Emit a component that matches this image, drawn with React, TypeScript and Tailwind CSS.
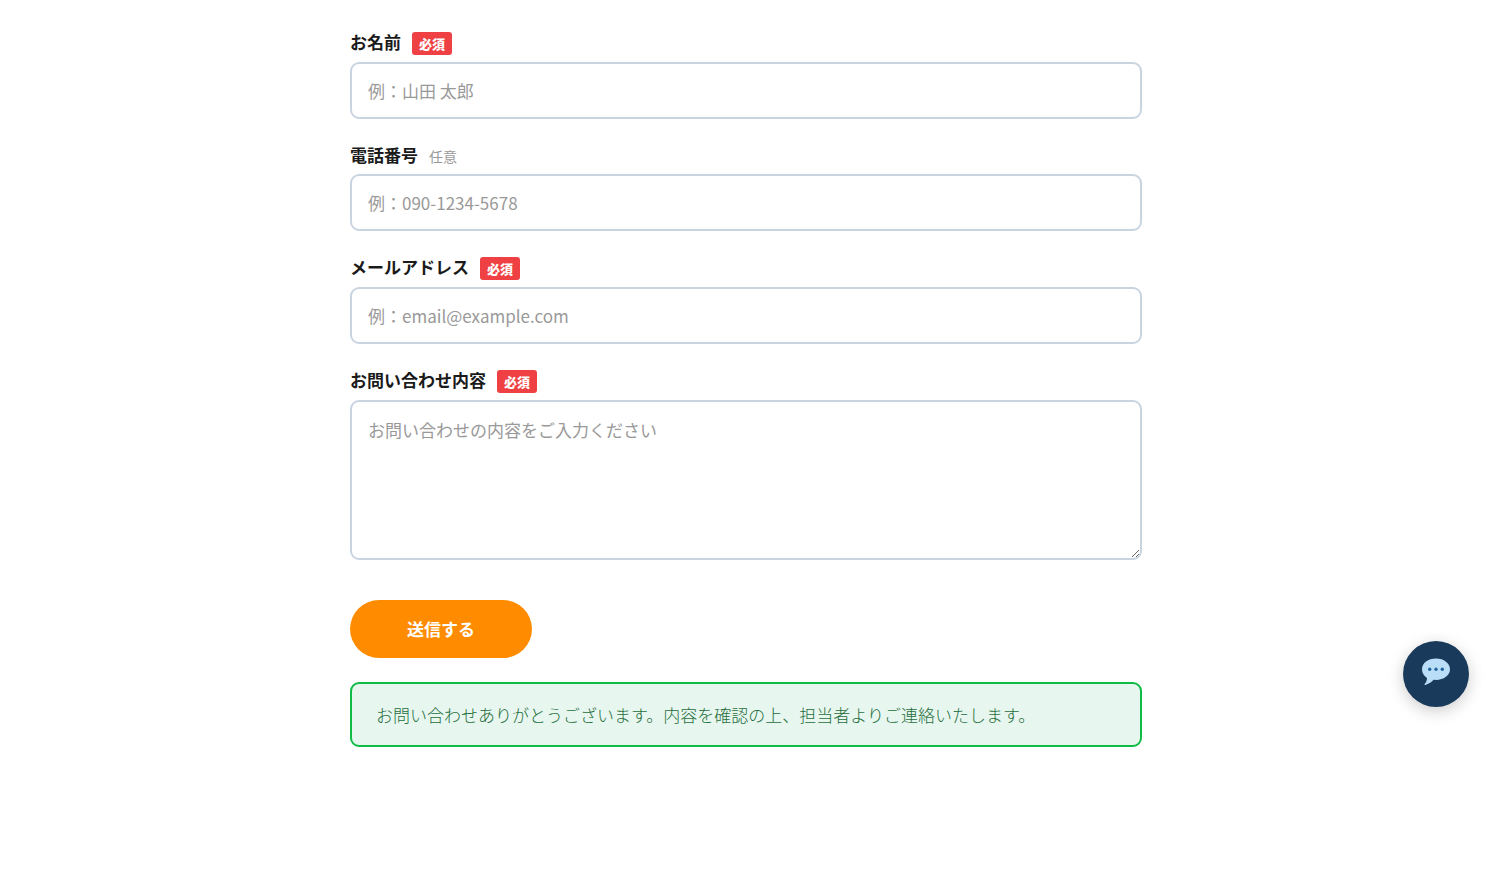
import { useState } from "react";
import type { ReactNode } from "react";

const control =
  "block w-full rounded-[9px] border-2 border-[#c9d4e1] bg-white px-4 text-[17px] text-[#1a1a1a] placeholder:text-[#999999] focus:border-[#1a3a5c] focus:outline-none";

function Field({
  id,
  label,
  required,
  children,
}: {
  id: string;
  label: string;
  required?: boolean;
  children: ReactNode;
}) {
  return (
    <div>
      <label htmlFor={id} className="mb-[7px] flex min-h-[22px] items-start gap-[11px] font-bold leading-[20px]">
        <span>{label}</span>
        {required ? (
          <span className="rounded-[3px] bg-[#ef4043] px-[7px] text-[13px] font-black leading-[23px] text-white">必須</span>
        ) : (
          <span className="text-[14px] font-normal leading-[22px] text-[#999999]">任意</span>
        )}
      </label>
      {children}
    </div>
  );
}

export default function App() {
  const [message, setMessage] = useState("");

  return (
    <main
      lang="ja"
      className="min-h-screen bg-white px-6 pt-8 pb-16 font-['Noto_Sans_CJK_JP',sans-serif] text-[17px] text-[#1a1a1a]"
    >
      <form className="mx-auto max-w-[792px]" onSubmit={(e) => e.preventDefault()}>
        <div className="flex flex-col gap-[26px]">
          <Field id="name" label="お名前" required>
            <input id="name" type="text" placeholder="例：山田 太郎" className={`${control} h-[57px]`} />
          </Field>
          <Field id="tel" label="電話番号">
            <input id="tel" type="tel" placeholder="例：090-1234-5678" className={`${control} h-[57px]`} />
          </Field>
          <Field id="email" label="メールアドレス" required>
            <input id="email" type="email" placeholder="例：email@example.com" className={`${control} h-[57px]`} />
          </Field>
          <Field id="message" label="お問い合わせ内容" required>
            <textarea
              id="message"
              value={message}
              onChange={(e) => setMessage(e.target.value)}
              placeholder="お問い合わせの内容をご入力ください"
              className={`${control} h-[160px] resize-y py-[15px] leading-[26px]`}
            />
          </Field>
        </div>
        <button
          type="submit"
          className="mt-10 block h-[58px] rounded-full bg-[#ff8c00] px-[57px] font-bold text-white hover:bg-[#e67e00]"
        >
          送信する
        </button>
        <p
          role="status"
          className="mt-6 rounded-[9px] border-2 border-[#0fbc45] bg-[#e7f6ef] px-6 py-4 font-light leading-[29px] text-[#1f6e3c]"
        >
          お問い合わせありがとうございます。内容を確認の上、担当者よりご連絡いたします。
        </p>
      </form>
      <button
        type="button"
        aria-label="チャットを開く"
        className="fixed right-[23px] bottom-[170px] flex size-[66px] items-center justify-center rounded-full bg-[#1a3a5c] shadow-[0_4px_16px_rgba(0,0,0,0.2)]"
      >
        <svg viewBox="0 0 30 30" className="mb-1 size-[30px]" aria-hidden="true">
          <path
            d="M15 1.400C7.200 1.400 1 5.900 1 12.200c0 3.700 2 6.800 5 8.700C6 23.200 5.200 25.200 3.700 27c-.5.700 0 1.200.8.900 3.600-1.200 6.400-3 8.100-5.100.8.100 1.600.1 2.400.1 7.800 0 14-4.700 14-10.700S22.800 1.400 15 1.400Z"
            fill="#bbdef8"
          />
          <circle cx="8.700" cy="12.300" r="1.700" fill="#2565a0" />
          <circle cx="15" cy="12.300" r="1.700" fill="#2565a0" />
          <circle cx="21.300" cy="12.300" r="1.700" fill="#2565a0" />
        </svg>
      </button>
    </main>
  );
}
